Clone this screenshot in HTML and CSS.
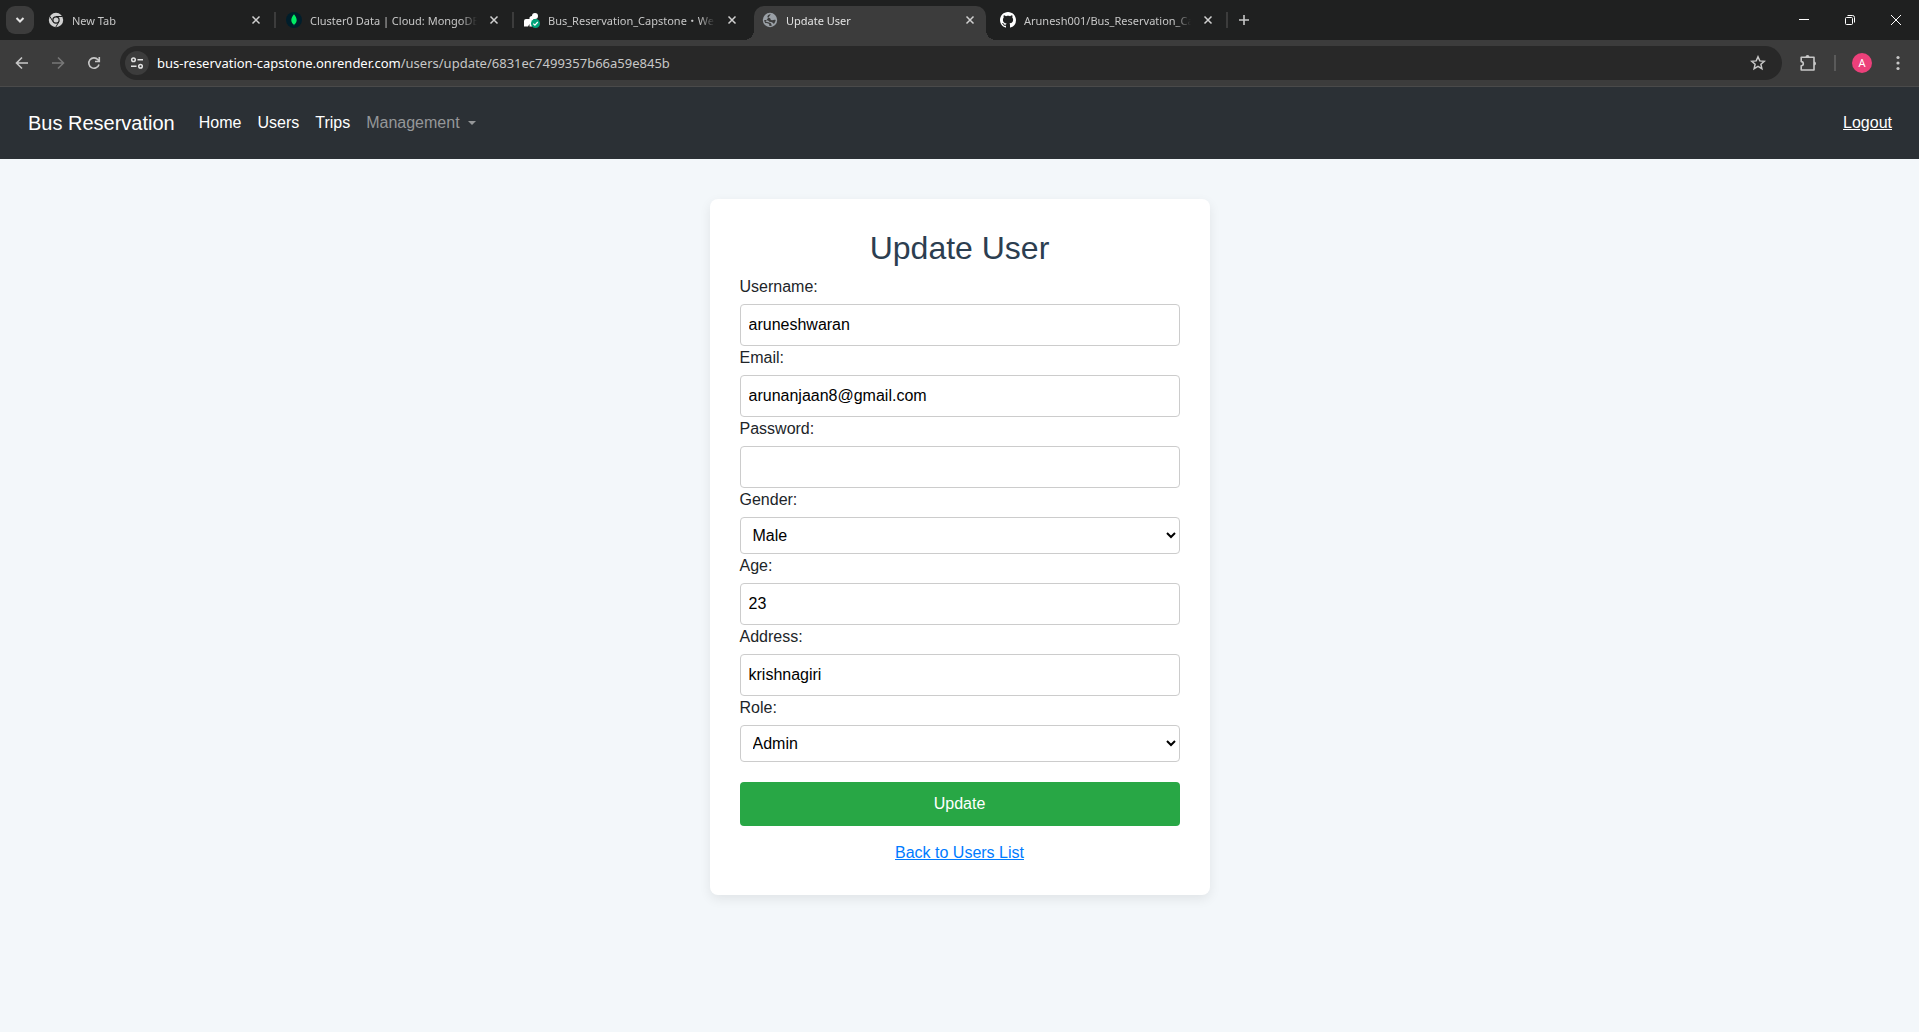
FILE: index.html
```html
<!DOCTYPE html>
<html lang="en">
<head>
<meta charset="utf-8">
<title>Update User</title>
<link rel="stylesheet" href="styles.css">
</head>
<body>
<header class="browser">
  <div class="tab-strip">
    <button class="tab-search" aria-label="Search tabs"><svg width="12" height="12" viewBox="0 0 12 12"><path d="M2.500 4l3.500 3.500L9.500 4" fill="none" stroke="#e3e3e3" stroke-width="2"/></svg></button>
    <div class="tabs">
      <div class="tab">
        <svg class="favicon" viewBox="0 0 16 16"><circle cx="8" cy="8" r="7.200" fill="#d0d0d0"/><path d="M8 4.500h6.300M5 9.700L1.800 4.300M11 9.700L7.800 15" stroke="#1f2020" stroke-width="1" fill="none"/><circle cx="8" cy="8" r="3.700" fill="#1f2020"/><circle cx="8" cy="8" r="2.500" fill="#d0d0d0"/></svg>
        <span class="tab-title">New Tab</span>
        <button class="tab-close" aria-label="Close tab"><svg width="10" height="10" viewBox="0 0 10 10"><path d="M1.500 1.500l7 7M8.500 1.500l-7 7"/></svg></button>
      </div>
      <div class="tab">
        <svg class="favicon" viewBox="0 0 16 16"><circle cx="8" cy="8" r="8" fill="#001e2b"/><path d="M8 2.200C6.300 4.200 5.300 6 5.300 8.200c0 2 1.100 3.300 2.400 4.200l.3 1.400.3-1.400c1.300-.9 2.400-2.200 2.400-4.200C10.700 6 9.700 4.200 8 2.200z" fill="#00ed64"/></svg>
        <span class="tab-title">Cluster0 Data | Cloud: MongoDB</span>
        <button class="tab-close" aria-label="Close tab"><svg width="10" height="10" viewBox="0 0 10 10"><path d="M1.500 1.500l7 7M8.500 1.500l-7 7"/></svg></button>
      </div>
      <div class="tab before-active">
        <svg class="favicon" viewBox="0 0 16 16"><path d="M0 14.500V9a2 2 0 0 1 2-2h3.500V5.500A2.500 2.500 0 0 1 8 4a3 3 0 1 1 3 3H9.500v2.500L8 14.500H5.500V12L4 14.500z" fill="#fff"/><circle cx="11.500" cy="11.500" r="4.500" fill="#00a37a"/><path d="M9.300 11.600l1.600 1.600 2.900-3.200" fill="none" stroke="#fff" stroke-width="1.200"/></svg>
        <span class="tab-title">Bus_Reservation_Capstone・Web</span>
        <button class="tab-close" aria-label="Close tab"><svg width="10" height="10" viewBox="0 0 10 10"><path d="M1.500 1.500l7 7M8.500 1.500l-7 7"/></svg></button>
      </div>
      <div class="tab active">
        <svg class="favicon" viewBox="0 0 16 16"><circle cx="8" cy="8" r="7.200" fill="#9aa0a6"/><path d="M8.800 2.300C6.500 2.500 5 4 5.500 5.200c.4 1 2.400.2 2.800 1.300.4 1 .2 1.700 1.700 1.700 1.300 0 2.200-.6 3.700-.2-.2 1.500-.9 2.800-1.700 3.700-1-.2-1.500-1.700-3-1.800l-1.700-.2C7 8.500 5.500 8 2.200 8c0 1 .4 2.200 1 3 1.500.2 3 .3 3.800 1 .5.500.2 1.200.2 1.800 1 .2 2 0 2.800-.4-.8-.6-.6-1.700-1.500-2.400C7.500 10.300 5.500 10.300 3.500 9.400" fill="#3c3c3c"/></svg>
        <span class="tab-title">Update User</span>
        <button class="tab-close" aria-label="Close tab"><svg width="10" height="10" viewBox="0 0 10 10"><path d="M1.500 1.500l7 7M8.500 1.500l-7 7"/></svg></button>
      </div>
      <div class="tab">
        <svg class="favicon" viewBox="0 0 16 16"><path fill="#fff" d="M8 0C3.580 0 0 3.580 0 8c0 3.540 2.290 6.530 5.470 7.590.4.070.55-.17.55-.38 0-.19-.01-.82-.01-1.490-2.010.37-2.530-.49-2.690-.94-.09-.23-.48-.94-.82-1.130-.28-.15-.68-.52-.01-.53.63-.01 1.080.58 1.230.82.72 1.210 1.870.87 2.330.66.07-.52.28-.87.51-1.070-1.780-.2-3.640-.89-3.640-3.950 0-.87.31-1.590.82-2.150-.08-.2-.36-1.020.08-2.120 0 0 .67-.21 2.200.82.64-.18 1.320-.27 2-.27s1.360.09 2 .27c1.530-1.040 2.200-.82 2.200-.82.44 1.100.16 1.920.08 2.120.51.56.82 1.270.82 2.150 0 3.070-1.870 3.750-3.650 3.950.29.25.54.73.54 1.480 0 1.070-.01 1.930-.01 2.200 0 .21.15.46.55.38A8.010 8.010 0 0 0 16 8c0-4.420-3.580-8-8-8z"/></svg>
        <span class="tab-title">Arunesh001/Bus_Reservation_Ca</span>
        <button class="tab-close" aria-label="Close tab"><svg width="10" height="10" viewBox="0 0 10 10"><path d="M1.500 1.500l7 7M8.500 1.500l-7 7"/></svg></button>
      </div>
      <button class="new-tab" aria-label="New tab"><svg width="12" height="12" viewBox="0 0 12 12"><path d="M6 1v10M1 6h10" stroke="#c7c7c7" stroke-width="1.600"/></svg></button>
    </div>
    <div class="window-controls">
      <button aria-label="Minimize"><svg width="12" height="12" viewBox="0 0 12 12"><path d="M1 5.500h10"/></svg></button>
      <button aria-label="Restore"><svg width="12" height="12" viewBox="0 0 12 12"><rect x="1.500" y="3.500" width="7" height="7" rx="1"/><path d="M3.500 1.500h5a2 2 0 0 1 2 2v5"/></svg></button>
      <button aria-label="Close"><svg width="12" height="12" viewBox="0 0 12 12"><path d="M1 1l10 10M11 1L1 11"/></svg></button>
    </div>
  </div>
  <div class="toolbar">
    <button class="tool" aria-label="Back"><svg width="16" height="16" viewBox="0 0 16 16"><path d="M14 8H3M8 2.500L2.500 8 8 13.500" fill="none" stroke="#c7c7c7" stroke-width="1.600"/></svg></button>
    <button class="tool" aria-label="Forward"><svg width="16" height="16" viewBox="0 0 16 16"><path d="M2 8h11M8 2.500L13.500 8 8 13.500" fill="none" stroke="#777" stroke-width="1.600"/></svg></button>
    <button class="tool" aria-label="Reload"><svg width="16" height="16" viewBox="0 0 16 16"><path d="M13 9.500A5.200 5.200 0 1 1 12 4.700L13.300 6M13.300 2v4.500H9" fill="none" stroke="#c7c7c7" stroke-width="1.600"/></svg></button>
    <div class="omnibox">
      <button class="site-info" aria-label="View site information"><svg width="14" height="14" viewBox="0 0 14 14" fill="none" stroke="#e3e3e3" stroke-width="1.500"><circle cx="3.500" cy="3.800" r="1.800"/><path d="M7.500 3.800h5.500M1 10.200h5.500"/><circle cx="10.500" cy="10.200" r="1.800"/></svg></button>
      <div class="url"><span class="url-host">bus-reservation-capstone.onrender.com</span>/users/update/6831ec7499357b66a59e845b</div>
      <button class="bookmark" aria-label="Bookmark this tab"><svg width="16" height="16" viewBox="0 0 16 16"><path d="M8 1.800l1.800 4.100 4.500.4-3.400 3 1 4.400L8 11.400l-3.900 2.300 1-4.400-3.400-3 4.500-.4z" fill="none" stroke="#c7c7c7" stroke-width="1.500"/></svg></button>
    </div>
    <div class="toolbar-end">
      <button class="tool" aria-label="Extensions"><svg width="18" height="18" viewBox="0 0 18 18"><path d="M2.200 3.200H15V16H2.200v-4.300c2.800-.2 2.800-3.900 0-4.100z" fill="none" stroke="#c7c7c7" stroke-width="1.600" stroke-linejoin="round"/><path d="M6.500 3a2 2 0 0 1 4 0zM15 7.500a2 2 0 0 1 0 4z" fill="#c7c7c7"/></svg></button>
      <span class="divider"></span>
      <button class="avatar" aria-label="Profile">A</button>
      <button class="menu" aria-label="Menu"><svg width="4" height="16" viewBox="0 0 4 16" fill="#c7c7c7"><circle cx="2" cy="2.500" r="1.600"/><circle cx="2" cy="8" r="1.600"/><circle cx="2" cy="13.500" r="1.600"/></svg></button>
    </div>
  </div>
</header>
<nav class="navbar">
  <a class="brand" href="#">Bus Reservation</a>
  <a class="nav-link" href="#">Home</a>
  <a class="nav-link" href="#">Users</a>
  <a class="nav-link" href="#">Trips</a>
  <a class="nav-link dropdown" href="#">Management</a>
  <a class="logout" href="#">Logout</a>
</nav>
<main class="page">
  <form class="card">
    <h1>Update User</h1>
    <label for="username">Username:</label>
    <input class="field" id="username" type="text" value="aruneshwaran">
    <label for="email">Email:</label>
    <input class="field" id="email" type="email" value="arunanjaan8@gmail.com">
    <label for="password">Password:</label>
    <input class="field" id="password" type="password">
    <label for="gender">Gender:</label>
    <select class="field choice" id="gender"><option>Male</option><option>Female</option></select>
    <label for="age">Age:</label>
    <input class="field" id="age" type="number" value="23">
    <label for="address">Address:</label>
    <input class="field" id="address" type="text" value="krishnagiri">
    <label for="role">Role:</label>
    <select class="field choice" id="role"><option>Admin</option><option>User</option></select>
    <button class="submit" type="submit">Update</button>
    <a class="back" href="#">Back to Users List</a>
  </form>
</main>
</body>
</html>
```
FILE: styles.css
```css
* {
  box-sizing: border-box;
}

body {
  margin: 0;
  min-height: 100vh;
  background: #f3f7fa;
  color: #212529;
  font: 16px/24px "Liberation Sans", Arial, sans-serif;
}

button {
  padding: 0;
  border: 0;
  background: none;
  font: inherit;
  color: inherit;
}

svg {
  display: block;
  flex: none;
}

/* Browser frame */
.browser {
  background: #3c3c3c;
  border-bottom: 1px solid #4a4a4a;
  font: 11px/16px "Noto Sans", "Noto Sans CJK JP", sans-serif;
  color: #c7c7c7;
}

.tab-strip {
  display: flex;
  height: 40px;
  padding-left: 6px;
  background: #1f2020;
}

.tab-search {
  display: grid;
  place-items: center;
  width: 28px;
  height: 28px;
  margin-top: 6px;
  border-radius: 9px;
  background: #3c3c3c;
}

.tabs {
  display: flex;
  flex: 1;
  min-width: 0;
  padding-left: 3px;
}

.tab {
  position: relative;
  display: flex;
  align-items: center;
  gap: 8px;
  flex: 0 1 238px;
  min-width: 0;
  padding: 0 14px 0 11px;
}

.tab:not(.active):not(.before-active)::after {
  content: "";
  position: absolute;
  right: -1px;
  top: 12px;
  width: 2px;
  height: 16px;
  background: #3c3c3c;
}

.tab.active {
  height: 34px;
  margin: 6px 3px 0;
  padding: 0 11px 6px 8px;
  flex-basis: 232px;
  border-radius: 10px 10px 0 0;
  background: #3c3c3c;
  color: #e3e3e3;
}

.tab.active::before,
.tab.active::after {
  content: "";
  position: absolute;
  bottom: 0;
  width: 10px;
  height: 10px;
}

.tab.active::before {
  left: -10px;
  background: radial-gradient(circle at 0 0, transparent 10px, #3c3c3c 10px);
}

.tab.active::after {
  right: -10px;
  background: radial-gradient(circle at 100% 0, transparent 10px, #3c3c3c 10px);
}

.favicon {
  width: 16px;
  height: 16px;
}

.tab-title {
  flex: 1;
  min-width: 0;
  padding-top: 1px;
  overflow: hidden;
  white-space: nowrap;
  mask-image: linear-gradient(to left, transparent 4px, #000 20px);
}

.tab-close svg {
  fill: none;
  stroke: #d0d0d0;
  stroke-width: 1.5px;
}

.new-tab {
  padding: 0 11px;
}

.window-controls {
  display: flex;
}

.window-controls button {
  display: grid;
  place-items: center;
  width: 46px;
}

.window-controls svg {
  fill: none;
  stroke: #fff;
}

.toolbar {
  display: flex;
  align-items: center;
  padding: 6px 12px 6px 4px;
}

.tool {
  display: grid;
  place-items: center;
  width: 36px;
  height: 34px;
}

.omnibox {
  display: flex;
  align-items: center;
  flex: 1;
  height: 34px;
  margin-left: 8px;
  padding: 0 16px 0 5px;
  border-radius: 17px;
  background: #282828;
}

.site-info {
  display: grid;
  place-items: center;
  width: 24px;
  height: 24px;
  border-radius: 50%;
  background: #3c3c3c;
}

.url {
  flex: 1;
  padding-left: 8px;
  font-size: 13px;
}

.url-host {
  color: #fff;
}

.toolbar-end {
  display: flex;
  align-items: center;
  padding-left: 8px;
}

.divider {
  width: 2px;
  height: 16px;
  margin: 0 16px 0 8px;
  background: #5a5a5a;
}

.avatar {
  width: 20px;
  height: 20px;
  border-radius: 50%;
  background: #ec407a;
  color: #fff;
}

.menu {
  padding: 0 7px 0 24px;
}

/* Site navigation */
.navbar {
  display: flex;
  align-items: center;
  gap: 16px;
  padding: 16px 27px 16px 28px;
  background: #2b3035;
}

.navbar a {
  color: #fff;
}

.brand {
  margin-right: 8px;
  font-size: 20px;
  line-height: 40px;
  text-decoration: none;
}

.nav-link {
  text-decoration: none;
}

.navbar .dropdown {
  display: flex;
  align-items: center;
  gap: 8px;
  color: #959799;
}

.dropdown::after {
  content: "";
  border: 4px solid transparent;
  border-top-color: currentColor;
  border-bottom: 0;
}

.logout {
  margin-left: auto;
}

/* Update form */
.page {
  padding: 40px 16px;
}

.card {
  display: flex;
  flex-direction: column;
  max-width: 500px;
  margin: 0 auto;
  padding: 30px;
  border-radius: 8px;
  background: #fff;
  box-shadow: 0 4px 12px rgba(0, 0, 0, 0.08);
}

.card h1 {
  margin: 0 0 8px;
  color: #2c3e50;
  font-size: 32px;
  font-weight: 400;
  line-height: 38px;
  text-align: center;
}

.field {
  width: 100%;
  height: 42px;
  margin: 5px 0 0;
  padding: 8px;
  border: 1px solid #ccc;
  border-radius: 4px;
  background: #fff;
  color: #000;
  font: inherit;
}

.choice {
  height: 37px;
}

.submit {
  margin-top: 20px;
  padding: 10px;
  border-radius: 4px;
  background: #28a745;
  color: #fff;
}

.back {
  margin-top: 15px;
  align-self: center;
  color: #007bff;
}
```
